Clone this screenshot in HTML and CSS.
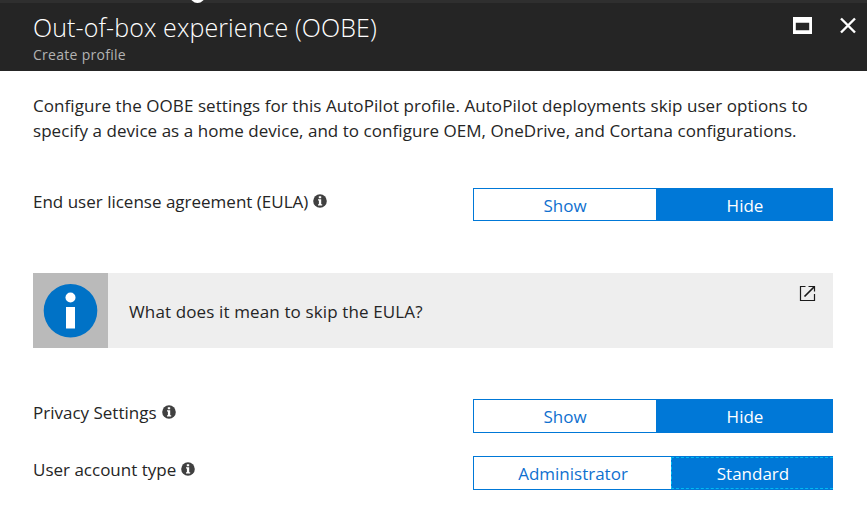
FILE: index.html
```
<!DOCTYPE html>
<html lang="en">
<head>
<meta charset="utf-8">
<title>Out-of-box experience (OOBE)</title>
<link rel="stylesheet" href="styles.css">
</head>
<body>
<svg class="defs" aria-hidden="true">
  <symbol id="info" viewBox="0 0 14 14">
    <circle cx="7" cy="7" r="6.800" fill="#404040"/>
    <path fill="#fff" d="M5.800 2.300h2.400v2H5.800zM5 5.300h3.200v4.900h1v1.200H5v-1.200h.9V6.500H5z"/>
  </symbol>
</svg>
<header class="header">
  <i class="knob"></i>
  <div class="titles">
    <h1 class="title">Out-of-box experience (OOBE)</h1>
    <p class="subtitle">Create profile</p>
  </div>
  <div class="actions">
    <svg width="19" height="17" viewBox="0 0 19 17"><path fill="#fff" fill-rule="evenodd" d="M0 0h19v17H0zM2.800 5.800v7.400h13.400V5.800z"/></svg>
    <svg width="16" height="17" viewBox="0 0 16 17"><path stroke="#fff" stroke-width="2.400" d="M1 1.500l14 14M15 1.500L1 15.500"/></svg>
  </div>
</header>
<main class="content">
  <p class="intro"><span class="l1">Configure the OOBE settings for this AutoPilot profile. AutoPilot deployments skip user options to</span><br><span class="l2">specify a device as a home device, and to configure OEM, OneDrive, and Cortana configurations.</span></p>
  <div class="row eula">
    <div class="label">End user license agreement (EULA)<svg class="info"><use href="#info"/></svg></div>
    <div class="toggle"><button class="opt">Show</button><button class="opt on">Hide</button></div>
  </div>
  <a class="notice">
    <span class="badge"><svg width="55" height="54" viewBox="0 0 55 54"><circle cx="27.500" cy="26.800" r="26.800" fill="#0072c6"/><circle cx="27.500" cy="13.500" r="5" fill="#fff"/><path fill="#fff" d="M23 23h9v21.500h-9z"/></svg></span>
    <span class="notice-text">What does it mean to skip the EULA?</span>
    <svg class="ext" width="17" height="17" viewBox="0 0 17 17"><path fill="none" stroke="#1b1b1b" stroke-width="1.200" d="M6.500 1.500H1.500v14h14V9M9.500 1.500h6v5"/><path stroke="#1b1b1b" stroke-width="1.700" d="M5.500 11.500L15 2"/></svg>
  </a>
  <div class="row">
    <div class="label">Privacy Settings<svg class="info"><use href="#info"/></svg></div>
    <div class="toggle tall"><button class="opt">Show</button><button class="opt on">Hide</button></div>
  </div>
  <div class="row account">
    <div class="label">User account type<svg class="info"><use href="#info"/></svg></div>
    <div class="toggle tall wide"><button class="opt">Administrator</button><button class="opt on focus">Standard</button></div>
  </div>
</main>
</body>
</html>
```
FILE: styles.css
```
* { box-sizing: border-box; }
body { margin: 0; background: #fff; color: #252525; font: 17px/25px "Open Sans", "Noto Sans", sans-serif; white-space: nowrap; overflow: hidden; }
h1, p { margin: 0; font-weight: 400; }
svg { display: block; }
.defs { position: absolute; width: 0; height: 0; }
.header { position: relative; height: 71px; background: linear-gradient(#2f2f2f 3px, #252525 3px); padding: 3px 11px 0 33px; display: flex; justify-content: space-between; overflow: hidden; }
.knob { position: absolute; left: 190px; top: -12px; width: 15px; height: 15px; border-radius: 50%; background: #fff; }
.title { margin-top: 6px; font-size: 25px; line-height: 36px; font-weight: 300; letter-spacing: .1px; color: #fff; }
.subtitle { font-size: 14px; line-height: 20px; letter-spacing: .28px; color: #b3b3b3; }
.actions { display: flex; align-items: flex-start; gap: 28px; padding-top: 14px; }
.content { padding: 22px 34px 0 33px; }
.l1 { letter-spacing: .065px; }
.l2 { letter-spacing: .047px; }
.row { display: flex; justify-content: space-between; align-items: flex-start; margin-top: 51px; }
.row.eula { margin-top: 45px; }
.row.account { margin-top: 23px; }
.label { display: flex; align-items: flex-start; margin-top: 1px; }
.info { width: 14px; height: 14px; margin: 5px 0 0 5px; }
.toggle { display: grid; grid-template-columns: 182px 1fr; width: 360px; height: 33px; border: 1px solid #0078d7; }
.toggle.tall { height: 34px; }
.toggle.wide { grid-template-columns: 197px 1fr; }
.opt { display: flex; justify-content: center; align-items: flex-start; border: 0; padding: 3px 0 0; background: #fff; color: #0f70cf; font: inherit; line-height: 28px; }
.opt.on { background: #0078d7; color: #fff; margin-right: -1px; padding-left: 1px; }
.wide .opt { padding-left: 1px; }
.opt.focus { border: 1px dashed #00bcf2; border-right: 0; padding-top: 2px; }
.notice { display: flex; width: 800px; height: 75px; margin-top: 52px; background: #eee; }
.badge { width: 75px; background: #bababa; padding: 11px 0 0 10px; }
.notice-text { margin: 26px auto 0 21px; letter-spacing: .13px; }
.ext { margin: 12px 17px 0 0; }
```
